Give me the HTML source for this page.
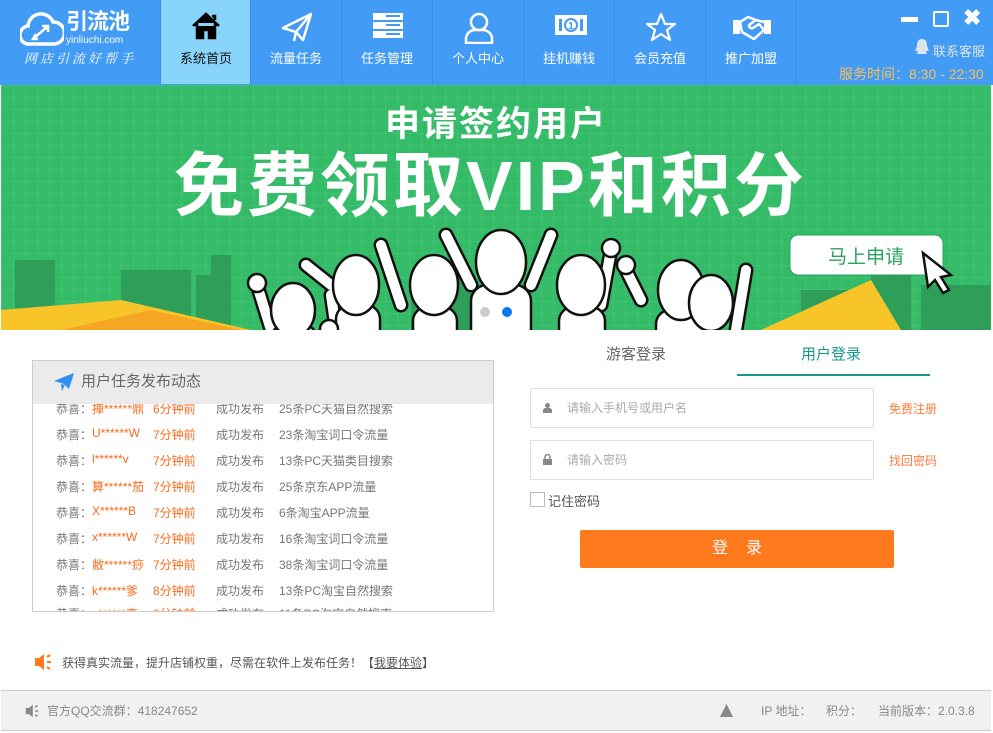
<!DOCTYPE html>
<html><head><meta charset="utf-8"><style>
*{margin:0;padding:0;box-sizing:border-box}
body{width:993px;height:733px;overflow:hidden;font-family:"Liberation Sans","Noto Sans CJK SC",sans-serif;background:#fff;position:relative;font-size:12px}
.hdr{position:absolute;left:0;top:0;width:993px;height:85px;background:#429bf4}
.tab{position:absolute;top:0;width:91px;height:84px;color:#fff;text-align:center;border-left:1px solid #3a8ee6}
.tab .lbl{position:absolute;top:48px;left:0;right:0;font-size:13px}
.tab svg{position:absolute;left:30px;top:12px}
.tab.on{background:#89d4fb;color:#111}
.ban{position:absolute;left:1px;top:85px;width:990px;height:245px;background:#34bb67;overflow:hidden;
background-image:linear-gradient(rgba(255,255,255,.07) 1px,transparent 1px),linear-gradient(90deg,rgba(255,255,255,.07) 1px,transparent 1px);background-size:12px 12px}
.t1{position:absolute;left:0;width:990px;top:19px;text-align:center;color:#fff;font-size:35px;font-weight:bold;letter-spacing:2px;line-height:1.2}
.t2{position:absolute;left:173px;top:59px;color:#fff;font-size:70px;font-weight:bold;letter-spacing:3px;white-space:nowrap;line-height:1.2}
.feed{position:absolute;left:32px;top:360px;width:462px;height:252px;border:1px solid #ccc;overflow:hidden}
.fh{height:43px;background:#ebebeb;color:#666;font-size:15px;line-height:41px;padding-left:48px;position:relative}
.row{position:absolute;left:24px;font-size:12px;color:#777;white-space:nowrap}
.row span{position:absolute;top:0}
.o{color:#ff6a1a}
.inp{position:absolute;left:530px;width:344px;height:40px;border:1px solid #ddd;border-radius:2px;color:#aaa;font-size:12px;line-height:38px;padding-left:36px}
.lk{position:absolute;left:889px;color:#ff7a3d;font-size:12px}
.ftr{position:absolute;left:1px;top:690px;width:990px;height:41px;background:#f1f1f1;border-top:1px solid #ccc;border-bottom:1px solid #ccc;color:#888;font-size:12px;line-height:40px}
</style></head><body>
<div class="hdr">
 <svg style="position:absolute;left:20px;top:12px" width="44" height="36" viewBox="0 0 44 36"><path d="M10 32 A9 9 0 0 1 8 14 A13 13 0 0 1 33 10 A10 10 0 0 1 34 32 Z" fill="none" stroke="#fff" stroke-width="3.5"/><path d="M13 27 L27 15 M22 14 L28 14 L28 20 M16 22 L13 27 L18 27" stroke="#fff" stroke-width="2.5" fill="none"/></svg>
 <div style="position:absolute;left:66px;top:10px;color:#fff;font-size:22px;font-weight:bold;letter-spacing:-1px;line-height:24px">引流池</div>
 <div style="position:absolute;left:66px;top:35px;color:#fff;font-size:10px;line-height:11px">yinliuchi.com</div>
 <div style="position:absolute;left:24px;top:51px;color:#fff;font-size:13px;letter-spacing:3px;font-style:italic;line-height:16px;font-family:'Liberation Serif','Noto Serif CJK SC',serif">网店引流好帮手</div>
 <div class="tab on" style="left:160px"><svg width="30" height="28" viewBox="0 0 30 28"><path d="M2 14 L15 2 L28 14 M6 11 V26 H12 V18 H18 V26 H24 V11 M21 4 H24 V8" fill="#000" stroke="#000" stroke-width="2.5"/></svg><div class="lbl">系统首页</div></div>
 <div class="tab" style="left:250px"><svg width="32" height="30" viewBox="0 0 32 30"><path d="M2 16 L30 2 L22 28 L15 20 Z M15 20 L13 29 M15 20 L30 2" fill="none" stroke="#fff" stroke-width="2.5" stroke-linejoin="round"/></svg><div class="lbl">流量任务</div></div>
 <div class="tab" style="left:341px"><svg width="32" height="28" viewBox="0 0 32 28"><rect x="1" y="1" width="30" height="7" fill="#fff"/><rect x="1" y="10" width="30" height="7" fill="#fff"/><rect x="1" y="19" width="30" height="7" fill="#fff"/><rect x="14" y="3" width="14" height="2" fill="#429bf4"/><rect x="14" y="12" width="14" height="2" fill="#429bf4"/><rect x="14" y="21" width="14" height="2" fill="#429bf4"/></svg><div class="lbl">任务管理</div></div>
 <div class="tab" style="left:432px"><svg width="32" height="32" viewBox="0 0 32 32"><circle cx="16" cy="10" r="8" fill="none" stroke="#fff" stroke-width="2.5"/><path d="M3 31 V26 A9 9 0 0 1 12 18 H20 A9 9 0 0 1 29 26 V31 Z" fill="none" stroke="#fff" stroke-width="2.5"/></svg><div class="lbl">个人中心</div></div>
 <div class="tab" style="left:523px"><svg width="34" height="26" viewBox="0 0 34 26"><rect x="1" y="3" width="32" height="20" fill="#fff"/><circle cx="17" cy="13" r="7" fill="#429bf4"/><circle cx="17" cy="13" r="5" fill="#fff"/><text x="17" y="17" font-size="10" text-anchor="middle" fill="#429bf4" font-family="Liberation Sans" font-weight="bold">1</text><rect x="5" y="7" width="3" height="12" fill="#429bf4"/><rect x="26" y="7" width="3" height="12" fill="#429bf4"/></svg><div class="lbl">挂机赚钱</div></div>
 <div class="tab" style="left:614px"><svg width="32" height="30" viewBox="0 0 32 30"><path d="M16 2 L20 12 L30 12 L22 18 L25 28 L16 22 L7 28 L10 18 L2 12 L12 12 Z" fill="none" stroke="#fff" stroke-width="2.2" stroke-linejoin="round"/></svg><div class="lbl">会员充值</div></div>
 <div class="tab" style="left:705px"><svg width="40" height="30" viewBox="0 0 40 30" style="left:26px"><path d="M1 8 H8 V22 H1 Z M32 8 H39 V22 H32 Z" fill="#fff"/><path d="M8 10 L16 5 L24 8 L17 13 A3 3 0 0 0 21 16 L27 12 L32 18 L22 27 L10 20 Z M24 8 L32 10" fill="none" stroke="#fff" stroke-width="2.5" stroke-linejoin="round"/></svg><div class="lbl">推广加盟</div></div>
 <div class="tab" style="left:796px;width:1px"></div>
 <div style="position:absolute;left:901px;top:17px;width:17px;height:5px;background:#fff"></div>
 <div style="position:absolute;left:933px;top:11px;width:16px;height:16px;border:2px solid #fff;border-radius:2px"></div>
 <div style="position:absolute;left:963px;top:5px;color:#fff;font-size:22px;font-weight:bold">✖</div>
 <svg style="position:absolute;left:913px;top:38px" width="18" height="18" viewBox="0 0 18 18"><path d="M9 1 C4 1 4 6 4 8 L2 13 L5 13 L4 16 H14 L13 13 L16 13 L14 8 C14 6 14 1 9 1Z" fill="#d9e4ee"/></svg>
 <div style="position:absolute;left:933px;top:41px;color:#dde6ef;font-size:13px">联系客服</div>
 <div style="position:absolute;left:839px;top:64px;color:#f5c15b;font-size:14px">服务时间：8:30 - 22:30</div>
</div>
<div class="ban">
 <div class="t1">申请签约用户</div>
 <div class="t2">免费领取VIP和积分</div>
 <svg style="position:absolute;left:0;top:0" width="990" height="245" viewBox="0 0 990 245">
  <g fill="#2e9e59"><rect x="14" y="175" width="40" height="70"/><rect x="120" y="185" width="70" height="60"/><rect x="195" y="190" width="30" height="55"/><rect x="210" y="170" width="20" height="75"/><rect x="410" y="190" width="60" height="55"/><rect x="800" y="205" width="60" height="40"/><rect x="870" y="180" width="40" height="65"/><rect x="920" y="200" width="70" height="45"/></g>
  <path d="M0 225 L120 215 L250 245 L0 245Z" fill="#f7c52a"/><path d="M60 245 L150 225 L240 245Z" fill="#f5a623"/>
  <path d="M760 245 L870 195 L900 245Z" fill="#f7c52a"/>
  <g stroke-linecap="round" fill="none">
   <g stroke="#111" stroke-width="15">
    <path d="M270 245 L256 200"/><path d="M335 245 L330 210"/><path d="M330 200 L305 180"/>
    <path d="M400 220 L380 160"/><path d="M470 200 L445 150"/><path d="M530 200 L550 150"/>
    <path d="M600 220 L610 165"/><path d="M640 215 L625 185"/><path d="M735 245 L745 185"/>
   </g>
   <g stroke="#fff" stroke-width="10">
    <path d="M270 245 L256 200"/><path d="M335 245 L330 210"/><path d="M330 200 L305 180"/>
    <path d="M400 220 L380 160"/><path d="M470 200 L445 150"/><path d="M530 200 L550 150"/>
    <path d="M600 220 L610 165"/><path d="M640 215 L625 185"/><path d="M735 245 L745 185"/>
   </g>
  </g>
  <g fill="#fff" stroke="#111" stroke-width="2.5">
   <rect x="272" y="240" width="42" height="20" rx="10"/>
   <rect x="335" y="220" width="44" height="40" rx="14"/>
   <rect x="412" y="222" width="44" height="40" rx="14"/>
   <rect x="470" y="200" width="60" height="60" rx="16"/>
   <rect x="558" y="222" width="46" height="40" rx="14"/>
   <rect x="655" y="225" width="50" height="40" rx="14"/>
   <ellipse cx="433" cy="200" rx="24" ry="30"/>
   <ellipse cx="580" cy="200" rx="24" ry="30"/>
   <ellipse cx="355" cy="200" rx="23" ry="30"/>
   <ellipse cx="292" cy="225" rx="22" ry="27"/>
   <ellipse cx="500" cy="177" rx="25" ry="32"/>
   <ellipse cx="680" cy="205" rx="23" ry="30"/>
   <ellipse cx="710" cy="218" rx="22" ry="28"/>
   <circle cx="256" cy="198" r="9"/><circle cx="328" cy="244" r="9"/><circle cx="610" cy="163" r="9"/><circle cx="625" cy="180" r="9"/>
  </g>
  <circle cx="484" cy="227" r="5" fill="#ccc"/><circle cx="506" cy="227" r="5" fill="#0a77f0"/>
  <rect x="789" y="150" width="153" height="40" rx="8" fill="#fff" stroke="#27a35c"/>
  <text x="865" y="178" font-size="19" text-anchor="middle" fill="#27a35c" font-family="Noto Sans CJK SC">马上申请</text>
  <path d="M922 168 L950 190 L940 192 L948 205 L942 208 L934 195 L927 202 Z" fill="#fff" stroke="#111" stroke-width="2.5"/>
 </svg>
</div>
<div class="feed">
 <div class="fh"><svg style="position:absolute;left:20px;top:11px" width="22" height="20" viewBox="0 0 22 20"><path d="M1 9 L21 1 L16 17 L11 12 Z M8 12 L9 19 L12 13 Z" fill="#2f8ff0"/></svg>用户任务发布动态</div>
</div>
<div style="position:absolute;left:56px;top:404px;width:430px;height:207px;overflow:hidden">
<div class="row" style="left:0;top:-4px">恭喜：<span class="o" style="left:36px">捙******鼎</span><span class="o" style="left:97px">6分钟前</span><span style="left:160px">成功发布</span><span style="left:223px">25条PC天猫自然搜索</span></div>
<div class="row" style="left:0;top:22px">恭喜：<span class="o" style="left:36px">U******W</span><span class="o" style="left:97px">7分钟前</span><span style="left:160px">成功发布</span><span style="left:223px">23条淘宝词口令流量</span></div>
<div class="row" style="left:0;top:48px">恭喜：<span class="o" style="left:36px">l******v</span><span class="o" style="left:97px">7分钟前</span><span style="left:160px">成功发布</span><span style="left:223px">13条PC天猫类目搜索</span></div>
<div class="row" style="left:0;top:74px">恭喜：<span class="o" style="left:36px">算******茄</span><span class="o" style="left:97px">7分钟前</span><span style="left:160px">成功发布</span><span style="left:223px">25条京东APP流量</span></div>
<div class="row" style="left:0;top:100px">恭喜：<span class="o" style="left:36px">X******B</span><span class="o" style="left:97px">7分钟前</span><span style="left:160px">成功发布</span><span style="left:223px">6条淘宝APP流量</span></div>
<div class="row" style="left:0;top:126px">恭喜：<span class="o" style="left:36px">x******W</span><span class="o" style="left:97px">7分钟前</span><span style="left:160px">成功发布</span><span style="left:223px">16条淘宝词口令流量</span></div>
<div class="row" style="left:0;top:152px">恭喜：<span class="o" style="left:36px">敝******痧</span><span class="o" style="left:97px">7分钟前</span><span style="left:160px">成功发布</span><span style="left:223px">38条淘宝词口令流量</span></div>
<div class="row" style="left:0;top:178px">恭喜：<span class="o" style="left:36px">k******爹</span><span class="o" style="left:97px">8分钟前</span><span style="left:160px">成功发布</span><span style="left:223px">13条PC淘宝自然搜索</span></div>
<div class="row" style="left:0;top:201px">恭喜：<span class="o" style="left:36px">c******高</span><span class="o" style="left:97px">8分钟前</span><span style="left:160px">成功发布</span><span style="left:223px">11条PC淘宝自然搜索</span></div>
</div>
<div style="position:absolute;left:606px;top:343px;color:#666;font-size:15px">游客登录</div>
<div style="position:absolute;left:801px;top:343px;color:#16998a;font-size:15px">用户登录</div>
<div style="position:absolute;left:737px;top:374px;width:193px;height:2px;background:#16998a"></div>
<div class="inp" style="top:388px"><svg style="position:absolute;left:12px;top:14px" width="9" height="10" viewBox="0 0 9 10"><circle cx="4.5" cy="2.5" r="2.5" fill="#888"/><path d="M0 10 V7 A3 3 0 0 1 3 5 H6 A3 3 0 0 1 9 7 V10Z" fill="#888"/></svg>请输入手机号或用户名</div>
<div class="inp" style="top:440px"><svg style="position:absolute;left:12px;top:13px" width="9" height="11" viewBox="0 0 9 11"><path d="M2 5 V3 A2.5 2.5 0 0 1 7 3 V5" fill="none" stroke="#888" stroke-width="1.5"/><rect x="0" y="5" width="9" height="6" fill="#888"/></svg>请输入密码</div>
<div class="lk" style="top:400px">免费注册</div>
<div class="lk" style="top:452px">找回密码</div>
<div style="position:absolute;left:530px;top:492px;width:15px;height:15px;border:1px solid #bbb"></div>
<div style="position:absolute;left:548px;top:491px;color:#555;font-size:13px">记住密码</div>
<div style="position:absolute;left:580px;top:530px;width:314px;height:38px;background:#ff7a1d;border-radius:2px;color:#fff;font-size:16px;text-align:center;line-height:38px;letter-spacing:18px;padding-left:18px">登录</div>
<svg style="position:absolute;left:34px;top:653px" width="18" height="18" viewBox="0 0 18 18"><path d="M1 5 H5 L10 1 V17 L5 13 H1 Z" fill="#ff7a1d"/><path d="M13 4 L16 2 M13 9 H17 M13 14 L16 16" stroke="#ff7a1d" stroke-width="2"/></svg>
<div style="position:absolute;left:62px;top:654px;color:#555;font-size:12px">获得真实流量，提升店铺权重，尽需在软件上发布任务！【<u>我要体验</u>】</div>
<div class="ftr">
 <svg style="position:absolute;left:24px;top:13px" width="14" height="14" viewBox="0 0 18 18"><path d="M1 5 H5 L10 1 V17 L5 13 H1 Z" fill="#888"/><path d="M13 4 L16 2 M13 9 H17 M13 14 L16 16" stroke="#888" stroke-width="2"/></svg>
 <span style="position:absolute;left:46px">官方QQ交流群：418247652</span>
 <svg style="position:absolute;left:719px;top:13px" width="13" height="13" viewBox="0 0 13 13"><path d="M6.5 0 L13 13 H0 Z" fill="#888"/></svg>
 <span style="position:absolute;left:760px">IP 地址：</span>
 <span style="position:absolute;left:825px">积分：</span>
 <span style="position:absolute;left:877px">当前版本：2.0.3.8</span>
</div>
</body></html>
